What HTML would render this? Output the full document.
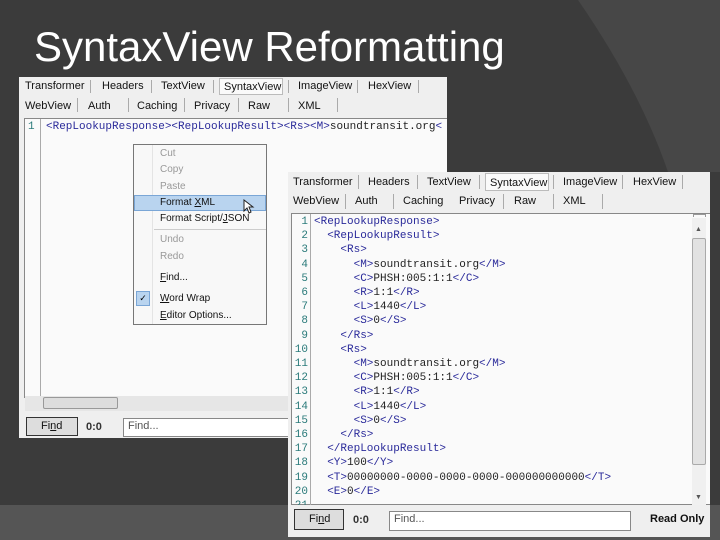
<!DOCTYPE html>
<html><head><meta charset="utf-8"><style>
*{margin:0;padding:0;box-sizing:border-box}
body{width:720px;height:540px;overflow:hidden;background:#3b3b3b;position:relative;font-family:"Liberation Sans",sans-serif}
.a{position:absolute}
.t{font-size:11px;color:#111;white-space:nowrap}
.sep{position:absolute;width:1px;background:#aaa}
.code{font-family:"Liberation Mono",monospace;font-size:11px;color:#2a2a9a;white-space:pre;line-height:14.2px}
.num{font-family:"Liberation Mono",monospace;font-size:11px;color:#2a7a7a;white-space:pre;line-height:14.2px;text-align:right}
.mi{position:absolute;left:160px;font-size:10px;color:#111;white-space:nowrap}
.dis{color:#999}
</style></head><body>
<svg class="a" style="left:0;top:0" width="720" height="540">
<path d="M578 0 Q640 90 668 172 L720 172 L720 0 Z" fill="#474747"/>
<rect x="0" y="505" width="720" height="35" fill="#555"/>
</svg>
<div class="a" style="left:34px;top:23px;font-size:42px;color:#fff;letter-spacing:0px">SyntaxView Reformatting</div>

<!-- window 1 -->
<div class="a" style="left:19px;top:77px;width:428px;height:361px;background:#efefef"></div>
<div class="a t" style="left:25px;top:80px">Transformer</div><div class="sep" style="left:90px;top:80px;height:13px"></div>
<div class="a t" style="left:102px;top:80px">Headers</div><div class="sep" style="left:151px;top:80px;height:13px"></div>
<div class="a t" style="left:161px;top:80px">TextView</div><div class="sep" style="left:213px;top:80px;height:13px"></div>
<div class="a" style="left:219px;top:78px;width:64px;height:17px;background:#fafafa;border:1px solid #bbb"></div>
<div class="a t" style="left:224px;top:81px">SyntaxView</div><div class="sep" style="left:288px;top:80px;height:13px"></div>
<div class="a t" style="left:298px;top:80px">ImageView</div><div class="sep" style="left:357px;top:80px;height:13px"></div>
<div class="a t" style="left:368px;top:80px">HexView</div><div class="sep" style="left:418px;top:80px;height:13px"></div>
<div class="a t" style="left:25px;top:100px">WebView</div><div class="sep" style="left:77px;top:98px;height:14px"></div>
<div class="a t" style="left:88px;top:100px">Auth</div><div class="sep" style="left:128px;top:98px;height:14px"></div>
<div class="a t" style="left:137px;top:100px">Caching</div><div class="sep" style="left:184px;top:98px;height:14px"></div>
<div class="a t" style="left:194px;top:100px">Privacy</div><div class="sep" style="left:238px;top:98px;height:14px"></div>
<div class="a t" style="left:248px;top:100px">Raw</div><div class="sep" style="left:288px;top:98px;height:14px"></div>
<div class="a t" style="left:298px;top:100px">XML</div><div class="sep" style="left:337px;top:98px;height:14px"></div>
<div class="a" style="left:24px;top:118px;width:423px;height:280px;background:#fafafa;border:1px solid #888;border-right:none"></div>
<div class="a" style="left:40px;top:119px;width:1px;height:277px;background:#aaa"></div>
<div class="a code" style="left:28px;top:120px;color:#2a7a7a">1</div>
<div class="a code" style="left:46px;top:120px">&lt;RepLookupResponse&gt;&lt;RepLookupResult&gt;&lt;Rs&gt;&lt;M&gt;<span style="color:#222">soundtransit.org</span>&lt;</div>
<div class="a" style="left:25px;top:396px;width:422px;height:15px;background:#e6e6e6"></div>
<div class="a" style="left:43px;top:397px;width:75px;height:12px;background:#ddd;border:1px solid #999;border-radius:2px"></div>
<div class="a" style="left:26px;top:417px;width:52px;height:19px;background:#ddd;border:1px solid #333"></div>
<div class="a t" style="left:41px;top:420px">Fi<u>n</u>d</div>
<div class="a t" style="left:86px;top:421px;font-weight:bold;color:#333">0:0</div>
<div class="a" style="left:123px;top:418px;width:170px;height:19px;background:#fff;border:1px solid #888"></div>
<div class="a t" style="left:128px;top:420px;color:#555">Find...</div>

<!-- context menu -->
<div class="a" style="left:133px;top:144px;width:134px;height:181px;background:#f8f8f8;border:1px solid #777"></div>
<div class="a" style="left:152px;top:145px;width:1px;height:179px;background:#e4e4e4"></div>
<div class="a" style="left:134px;top:195px;width:132px;height:16px;background:#b9d4ef;border:1px solid #7aa6d6"></div>
<div class="a" style="left:154px;top:229px;width:112px;height:1px;background:#ccc"></div>
<div class="a" style="left:136px;top:291px;width:14px;height:15px;background:#b9d4ef;border:1px solid #7aa6d6;font-size:9px;text-align:center;line-height:13px">✓</div>
<div class="mi dis" style="top:148px">Cut</div>
<div class="mi dis" style="top:164px">Copy</div>
<div class="mi dis" style="top:181px">Paste</div>
<div class="mi" style="top:197px">Format <u>X</u>ML</div>
<div class="mi" style="top:213px">Format Script/<u>J</u>SON</div>
<div class="mi dis" style="top:234px">Undo</div>
<div class="mi dis" style="top:251px">Redo</div>
<div class="mi" style="top:272px"><u>F</u>ind...</div>
<div class="mi" style="top:293px"><u>W</u>ord Wrap</div>
<div class="mi" style="top:310px"><u>E</u>ditor Options...</div>
<svg class="a" style="left:243px;top:199px" width="12" height="15"><path d="M1 1 L1 12 L4 9 L6 14 L8 13 L6 8 L10 8 Z" fill="#fff" stroke="#222" stroke-width="1"/></svg>

<!-- window 2 -->
<div class="a" style="left:288px;top:172px;width:422px;height:365px;background:#efefef"></div>
<div class="a t" style="left:293px;top:176px">Transformer</div><div class="sep" style="left:358px;top:175px;height:14px"></div>
<div class="a t" style="left:368px;top:176px">Headers</div><div class="sep" style="left:417px;top:175px;height:14px"></div>
<div class="a t" style="left:427px;top:176px">TextView</div><div class="sep" style="left:479px;top:175px;height:14px"></div>
<div class="a" style="left:485px;top:173px;width:64px;height:18px;background:#fafafa;border:1px solid #bbb"></div>
<div class="a t" style="left:490px;top:177px">SyntaxView</div><div class="sep" style="left:553px;top:175px;height:14px"></div>
<div class="a t" style="left:563px;top:176px">ImageView</div><div class="sep" style="left:622px;top:175px;height:14px"></div>
<div class="a t" style="left:633px;top:176px">HexView</div><div class="sep" style="left:682px;top:175px;height:14px"></div>
<div class="a t" style="left:293px;top:195px">WebView</div><div class="sep" style="left:345px;top:194px;height:15px"></div>
<div class="a t" style="left:355px;top:195px">Auth</div><div class="sep" style="left:393px;top:194px;height:15px"></div>
<div class="a t" style="left:403px;top:195px">Caching</div>
<div class="a t" style="left:459px;top:195px">Privacy</div><div class="sep" style="left:503px;top:194px;height:15px"></div>
<div class="a t" style="left:514px;top:195px">Raw</div><div class="sep" style="left:553px;top:194px;height:15px"></div>
<div class="a t" style="left:563px;top:195px">XML</div><div class="sep" style="left:602px;top:194px;height:15px"></div>
<div class="a" style="left:291px;top:213px;width:419px;height:292px;background:#fafafa;border:1px solid #888;border-right:none;overflow:hidden"></div>
<div class="a" style="left:310px;top:214px;width:1px;height:291px;background:#aaa"></div>
<div class="a num" style="left:292px;top:215px;width:16px">1
2
3
4
5
6
7
8
9
10
11
12
13
14
15
16
17
18
19
20
21</div>
<div class="a" style="left:291px;top:505px;width:419px;height:32px;background:#efefef"></div>
<div class="a code" style="left:314px;top:215px">&lt;RepLookupResponse&gt;
  &lt;RepLookupResult&gt;
    &lt;Rs&gt;
      &lt;M&gt;<span style="color:#222">soundtransit.org</span>&lt;/M&gt;
      &lt;C&gt;<span style="color:#222">PHSH:005:1:1</span>&lt;/C&gt;
      &lt;R&gt;<span style="color:#222">1:1</span>&lt;/R&gt;
      &lt;L&gt;<span style="color:#222">1440</span>&lt;/L&gt;
      &lt;S&gt;<span style="color:#222">0</span>&lt;/S&gt;
    &lt;/Rs&gt;
    &lt;Rs&gt;
      &lt;M&gt;<span style="color:#222">soundtransit.org</span>&lt;/M&gt;
      &lt;C&gt;<span style="color:#222">PHSH:005:1:1</span>&lt;/C&gt;
      &lt;R&gt;<span style="color:#222">1:1</span>&lt;/R&gt;
      &lt;L&gt;<span style="color:#222">1440</span>&lt;/L&gt;
      &lt;S&gt;<span style="color:#222">0</span>&lt;/S&gt;
    &lt;/Rs&gt;
  &lt;/RepLookupResult&gt;
  &lt;Y&gt;<span style="color:#222">100</span>&lt;/Y&gt;
  &lt;T&gt;<span style="color:#222">00000000-0000-0000-0000-000000000000</span>&lt;/T&gt;
  &lt;E&gt;<span style="color:#222">0</span>&lt;/E&gt;</div>
<div class="a" style="left:692px;top:218px;width:14px;height:287px;background:#f0f0f0"></div>
<div class="a" style="left:692px;top:238px;width:14px;height:227px;background:#e2e2e2;border:1px solid #aaa;border-radius:2px"></div>
<div class="a" style="left:695px;top:226px;font-size:7px;color:#555">▲</div>
<div class="a" style="left:695px;top:494px;font-size:7px;color:#555">▼</div>
<div class="a" style="left:693px;top:214px;width:13px;height:3px;border:1px solid #999;border-bottom:none"></div>
<div class="a" style="left:294px;top:509px;width:50px;height:21px;background:#ddd;border:1px solid #333"></div>
<div class="a t" style="left:309px;top:513px">Fi<u>n</u>d</div>
<div class="a t" style="left:353px;top:514px;font-weight:bold;color:#333">0:0</div>
<div class="a" style="left:389px;top:511px;width:242px;height:20px;background:#fff;border:1px solid #888"></div>
<div class="a t" style="left:394px;top:513px;color:#555">Find...</div>
<div class="a t" style="left:650px;top:513px;font-weight:bold">Read Only</div>
</body></html>
